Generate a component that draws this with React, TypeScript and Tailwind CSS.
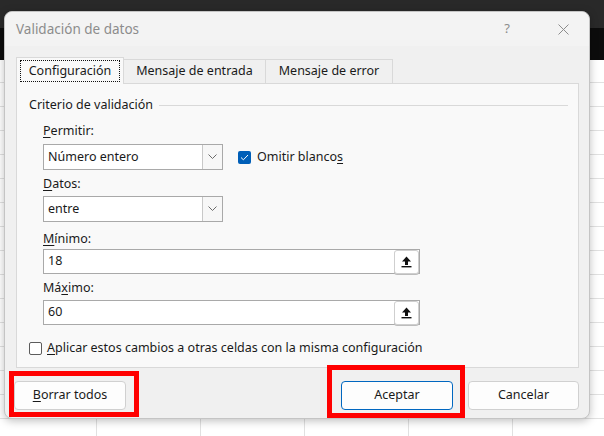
import React from "react";

const font = { fontFamily: '"Noto Sans", "Segoe UI", sans-serif' };

function U({ children }: { children: React.ReactNode }) {
  return <span className="underline underline-offset-2 decoration-[1px]">{children}</span>;
}

function Chevron() {
  return (
    <svg width="9" height="6" viewBox="0 0 9 6" fill="none">
      <path d="M0.5 0.5 L4.5 4.5 L8.5 0.5" stroke="#6b6b6b" strokeWidth="1" />
    </svg>
  );
}

function Select({ value }: { value: string }) {
  return (
    <div className="flex h-[26px] w-[180px] border border-[#a9a9a9] bg-white">
      <div className="flex-1 flex items-center pl-[4px] text-[12.5px] text-[#1a1a1a]">{value}</div>
      <div className="w-[20px] flex items-center justify-center border-l border-[#c8c8c8] bg-[#f7f7f7]">
        <Chevron />
      </div>
    </div>
  );
}

function RangeInput({ value }: { value: string }) {
  return (
    <div className="flex h-[25px] w-[377px] items-center border border-[#a9a9a9] bg-white">
      <div className="flex-1 pl-[4px] text-[12.5px] text-[#1a1a1a]">{value}</div>
      <div className="flex h-[24px] w-[25px] items-center justify-center rounded-[3px] border border-[#cfcfcf] bg-white shadow-[0_1px_0_#bdbdbd]">
        <svg width="11" height="12" viewBox="0 0 11 12">
          <path d="M5.5 0.5 L10 5.5 L7 5.5 L7 9 L4 9 L4 5.5 L1 5.5 Z" fill="#111" />
          <rect x="0.5" y="10" width="10" height="1.4" fill="#111" />
        </svg>
      </div>
    </div>
  );
}

function Checkbox({ checked }: { checked?: boolean }) {
  return checked ? (
    <div className="flex h-[13px] w-[13px] items-center justify-center rounded-[2px] bg-[#005fb8]">
      <svg width="9" height="7" viewBox="0 0 9 7" fill="none">
        <path d="M1 3.5 L3.4 5.8 L8 1" stroke="#fff" strokeWidth="1" />
      </svg>
    </div>
  ) : (
    <div className="h-[13px] w-[13px] rounded-[2px] border border-[#5c5c5c] bg-white" />
  );
}

function Button({ children, primary }: { children: React.ReactNode; primary?: boolean }) {
  return (
    <div
      className={`flex h-[29px] items-center justify-center rounded-[4px] border text-[12.5px] text-[#1a1a1a] ${
        primary ? "border-[#0067c0] bg-[#fdfdfd]" : "border-[#d0d0d0] bg-[#fdfdfd]"
      }`}
    >
      {children}
    </div>
  );
}

export default function App() {
  return (
    <div className="relative h-[436px] w-[604px] overflow-hidden bg-white" style={font}>
      {/* excel behind */}
      <div className="h-[28px] bg-[#292929]" />
      <div className="h-[32px] bg-[#0c0c0c]" />
      <div className="h-[376px] bg-white bg-[linear-gradient(to_bottom,transparent_23px,#e1e1e1_23px),linear-gradient(to_right,transparent_96px,#e1e1e1_96px,#e1e1e1_97px,transparent_97px)] bg-[length:100%_24px,104px_100%] bg-[position:0_-1px,0_0]" />

      {/* dialog */}
      <div className="absolute left-[4px] top-[11px] flex h-[408px] w-[586px] flex-col rounded-[8px] border border-[#c4c4c4] bg-[#f0f0f0] shadow-[0_2px_8px_rgba(0,0,0,0.25)]">
        <div className="flex h-[34px] items-center rounded-t-[8px] bg-[#f3f3f3] pl-[11px] pr-[20px]">
          <span className="flex-1 text-[13.5px] text-[#8c8c8c]">Validación de datos</span>
          <span className="mr-[48px] text-[13px] text-[#8c8c8c]">?</span>
          <svg width="11" height="11" viewBox="0 0 11 11">
            <path d="M0.5 0.5 L10.5 10.5 M10.5 0.5 L0.5 10.5" stroke="#8c8c8c" strokeWidth="1" />
          </svg>
        </div>

        {/* tabs */}
        <div className="mt-[11px] flex h-[26px] items-end pl-[11px] text-[12.5px] text-[#1a1a1a]">
          <div className="relative z-10 -mb-px flex h-[27px] w-[108px] items-center justify-center border border-b-0 border-[#d9d9d9] bg-[#f9f9f9]">
            <span className="flex h-[22px] w-[100px] items-center justify-center border border-dotted border-[#111]">
              Configuración
            </span>
          </div>
          <div className="flex h-[24px] w-[142px] items-center justify-center border border-l-0 border-b-0 border-[#d9d9d9] bg-[#f0f0f0]">
            Mensaje de entrada
          </div>
          <div className="flex h-[24px] w-[127px] items-center justify-center border border-l-0 border-b-0 border-[#d9d9d9] bg-[#f0f0f0]">
            Mensaje de error
          </div>
        </div>

        {/* panel */}
        <div className="ml-[11px] flex h-[285px] w-[563px] flex-col border border-[#d9d9d9] bg-[#f9f9f9] text-[12.5px] text-[#1a1a1a]">
          <div className="mt-[12px] flex h-[18px] items-center pl-[12px] pr-[10px]">
            <span>Criterio de validación</span>
            <div className="ml-[6px] h-px flex-1 bg-[#d9d9d9]" />
          </div>

          <div className="pl-[26px]">
            <div className="mt-[8px] h-[18px] leading-[18px]">
              <U>P</U>ermitir:
            </div>
            <div className="mt-[4px] flex items-center">
              <Select value="Número entero" />
              <div className="ml-[15px] flex items-center gap-[6px]">
                <Checkbox checked />
                <span>
                  Omitir blanco<U>s</U>
                </span>
              </div>
            </div>
            <div className="mt-[5px] h-[18px] leading-[18px]">
              <U>D</U>atos:
            </div>
            <div className="mt-[3px]">
              <Select value="entre" />
            </div>
            <div className="mt-[8px] h-[18px] leading-[18px]">
              <U>M</U>ínimo:
            </div>
            <div className="mt-[1px]">
              <RangeInput value="18" />
            </div>
            <div className="mt-[5px] h-[18px] leading-[18px]">
              Má<U>x</U>imo:
            </div>
            <div className="mt-[3px]">
              <RangeInput value="60" />
            </div>
          </div>

          <div className="mt-[14px] flex h-[18px] items-center gap-[5px] pl-[12px]">
            <Checkbox />
            <span>
              <U>A</U>plicar estos cambios a otras celdas con la misma configuración
            </span>
          </div>
        </div>

        {/* buttons */}
        <div className="mt-[13px] flex pl-[9px] pr-[10px]">
          <div className="w-[112px]">
            <Button>
              <span>
                <U>B</U>orrar todos
              </span>
            </Button>
          </div>
          <div className="flex-1" />
          <div className="w-[112px]">
            <Button primary>Aceptar</Button>
          </div>
          <div className="ml-[15px] w-[111px]">
            <Button>Cancelar</Button>
          </div>
        </div>
      </div>

      {/* red highlight boxes */}
      <div className="absolute left-[9px] top-[371px] h-[46px] w-[130px] border-[5px] border-[#ff0000]" />
      <div className="absolute left-[327px] top-[365px] h-[53px] w-[138px] border-[5px] border-[#ff0000]" />
    </div>
  );
}
